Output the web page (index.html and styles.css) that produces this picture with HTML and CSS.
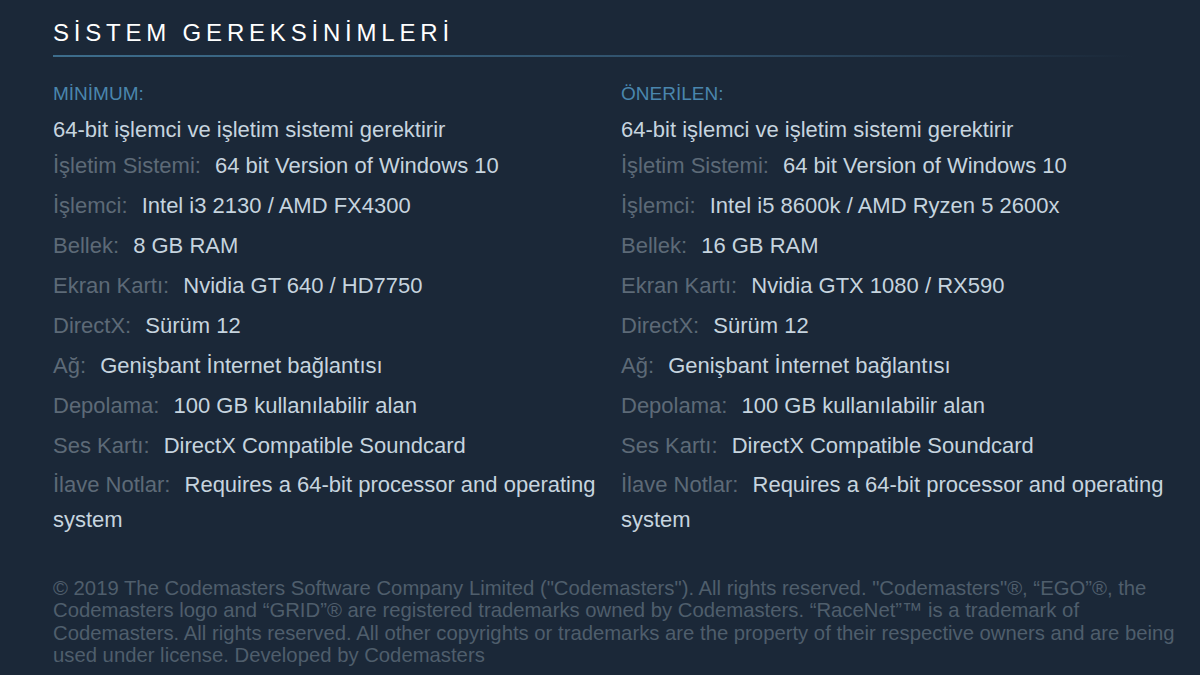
FILE: index.html
```html
<!DOCTYPE html>
<html lang="tr">
<head>
  <meta charset="UTF-8">
  <meta name="viewport" content="width=device-width, initial-scale=1.0">
  <title>Sistem Gereksinimleri</title>
  <link rel="stylesheet" href="styles.css">
</head>
<body>

<div class="sysreq">
  <h2>Sistem Gereksinimleri</h2>

  <div class="req-cols">
    <div class="req-col">
      <div class="req-title">MİNİMUM:</div>
      <ul class="req-list">
        <li>64-bit işlemci ve işletim sistemi gerektirir</li>
        <li><strong>İşletim Sistemi:</strong> 64 bit Version of Windows 10</li>
        <li><strong>İşlemci:</strong> Intel i3 2130 / AMD FX4300</li>
        <li><strong>Bellek:</strong> 8 GB RAM</li>
        <li><strong>Ekran Kartı:</strong> Nvidia GT 640 / HD7750</li>
        <li><strong>DirectX:</strong> Sürüm 12</li>
        <li><strong>Ağ:</strong> Genişbant İnternet bağlantısı</li>
        <li><strong>Depolama:</strong> 100 GB kullanılabilir alan</li>
        <li><strong>Ses Kartı:</strong> DirectX Compatible Soundcard</li>
        <li><strong>İlave Notlar:</strong> Requires a 64-bit processor and operating system</li>
      </ul>
    </div>
    <div class="req-col">
      <div class="req-title">ÖNERİLEN:</div>
      <ul class="req-list">
        <li>64-bit işlemci ve işletim sistemi gerektirir</li>
        <li><strong>İşletim Sistemi:</strong> 64 bit Version of Windows 10</li>
        <li><strong>İşlemci:</strong> Intel i5 8600k / AMD Ryzen 5 2600x</li>
        <li><strong>Bellek:</strong> 16 GB RAM</li>
        <li><strong>Ekran Kartı:</strong> Nvidia GTX 1080 / RX590</li>
        <li><strong>DirectX:</strong> Sürüm 12</li>
        <li><strong>Ağ:</strong> Genişbant İnternet bağlantısı</li>
        <li><strong>Depolama:</strong> 100 GB kullanılabilir alan</li>
        <li><strong>Ses Kartı:</strong> DirectX Compatible Soundcard</li>
        <li><strong>İlave Notlar:</strong> Requires a 64-bit processor and operating system</li>
      </ul>
    </div>
  </div>

  <p class="legal">© 2019 The Codemasters Software Company Limited ("Codemasters"). All rights reserved. "Codemasters"®, “EGO”®, the Codemasters logo and “GRID”® are registered trademarks owned by Codemasters. “RaceNet”™ is a trademark of Codemasters. All rights reserved. All other copyrights or trademarks are the property of their respective owners and are being used under license. Developed by Codemasters</p>
</div>

</body>
</html>
```

FILE: styles.css
```css
html, body {
  margin: 0;
  background-color: #1b2838;
}
body {
  font-family: Arial, "Liberation Sans", sans-serif;
}
.sysreq {
  padding: 18px 0 0 53px;
  width: 1135px;
}
.sysreq h2 {
  margin: 0;
  padding-bottom: 8px;
  font-size: 24px;
  font-weight: normal;
  line-height: 30px;
  letter-spacing: 4.8px;
  text-transform: uppercase;
  color: #ffffff;
}
.sysreq h2::after {
  content: "";
  display: block;
  height: 2px;
  margin-top: 7px;
  width: 1080px;
  background: linear-gradient(to right, #3d6d8c 0%, #30506a 60%, rgba(27, 40, 56, 0) 100%);
}
.req-cols {
  display: grid;
  grid-template-columns: 550px 550px;
  column-gap: 18px;
  margin-top: 17px;
}
.req-title {
  font-size: 19px;
  line-height: 24px;
  color: #4a86ad;
  margin-bottom: 6px;
}
.req-list {
  list-style: none;
  margin: 0;
  padding: 0;
}
.req-list li {
  font-size: 22px;
  line-height: 35px;
  margin-bottom: 5px;
  color: #c6d4df;
}
.req-list li:first-child {
  margin-bottom: 1px;
}
.req-list li:last-child {
  margin-top: -1px;
}
.req-list strong {
  font-weight: normal;
  color: #5d6a77;
  margin-right: 8px;
}
.legal {
  margin: 35px 0 0;
  font-size: 20.3px;
  line-height: 22.3px;
  color: #4f5e6c;
}
```
